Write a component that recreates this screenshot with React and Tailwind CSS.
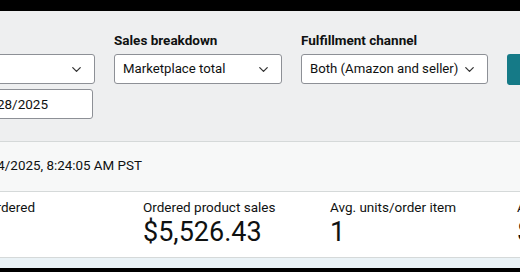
import React from 'react';
import { ChevronDown } from 'lucide-react';

const font = { fontFamily: 'Roboto, "Noto Sans", Arial, sans-serif' };

function Select({ value, className = '' }) {
  return (
    <div className={`h-[30px] bg-white border border-[#8d9096] rounded-[3px] flex items-center justify-between pl-[8px] pr-[10px] text-[13.2px] text-[#0f1111] ${className}`}>
      <span className="whitespace-nowrap">{value}</span>
      <ChevronDown size={15} strokeWidth={2} className="text-[#333] shrink-0" />
    </div>
  );
}

function Metric({ label, value }) {
  return (
    <div className="w-[187px] shrink-0 text-[#0f1111] whitespace-nowrap">
      <div className="text-[13.5px] leading-[18px]">{label}</div>
      <div className="text-[27px] leading-[30px] mt-[1px]">{value}</div>
    </div>
  );
}

export default function App() {
  return (
    <div className="w-[520px] h-[272px] bg-black overflow-hidden flex flex-col" style={font}>
      <div className="h-[11px] shrink-0" />

      {/* Filters */}
      <div className="h-[130px] shrink-0 bg-[#eeeff0] overflow-hidden">
        <div className="flex gap-[19px] pt-[20px] -ml-[79px]">
          <div className="w-[174px] shrink-0">
            <div className="text-[13.5px] font-bold leading-[18px] text-[#e6e8e8]">Date range</div>
            <Select value="" className="mt-[5px]" />
            <div className="mt-[5px] w-[172px] h-[30px] bg-white border border-[#8d9096] rounded-[3px] flex items-center justify-end pr-[44px] text-[13.5px] text-[#0f1111] whitespace-nowrap">
              03/28/2025
            </div>
          </div>
          <div className="w-[168px] shrink-0">
            <div className="text-[13.5px] font-bold leading-[18px] text-[#0f1111]">Sales breakdown</div>
            <Select value="Marketplace total" className="mt-[5px]" />
          </div>
          <div className="w-[187px] shrink-0">
            <div className="text-[13.5px] font-bold leading-[18px] text-[#0f1111]">Fulfillment channel</div>
            <Select value="Both (Amazon and seller)" className="mt-[5px]" />
          </div>
          <div className="w-[60px] shrink-0 pt-[23px]">
            <div className="h-[31px] rounded-[3px] bg-[#157a87]" />
          </div>
        </div>
      </div>

      {/* Timestamp */}
      <div className="h-[50px] shrink-0 bg-[#f7f8f8] border-t border-[#d5d9d9] flex items-center overflow-hidden">
        <div className="w-[142px] shrink-0 flex justify-end text-[13.4px] text-[#0f1111] whitespace-nowrap">
          <span>Last updated: 3/24/2025, 8:24:05 AM PST</span>
        </div>
      </div>

      {/* Metrics */}
      <div className="h-[67px] shrink-0 bg-white border-t border-b border-[#d5d9d9] overflow-hidden">
        <div className="flex pt-[6px]">
          <div className="w-[143px] shrink-0 flex justify-end">
            <div className="shrink-0 text-[#0f1111] whitespace-nowrap pr-[108px]">
              <div className="text-[13.5px] leading-[18px]">Units ordered</div>
              <div className="text-[27px] leading-[30px] mt-[1px]">&nbsp;</div>
            </div>
          </div>
          <Metric label="Ordered product sales" value="$5,526.43" />
          <Metric label="Avg. units/order item" value="1" />
          <Metric label="Avg. sales/order item" value="$92.11" />
        </div>
      </div>

      <div className="h-[10px] shrink-0 bg-[#eaf2f6]" />
    </div>
  );
}
